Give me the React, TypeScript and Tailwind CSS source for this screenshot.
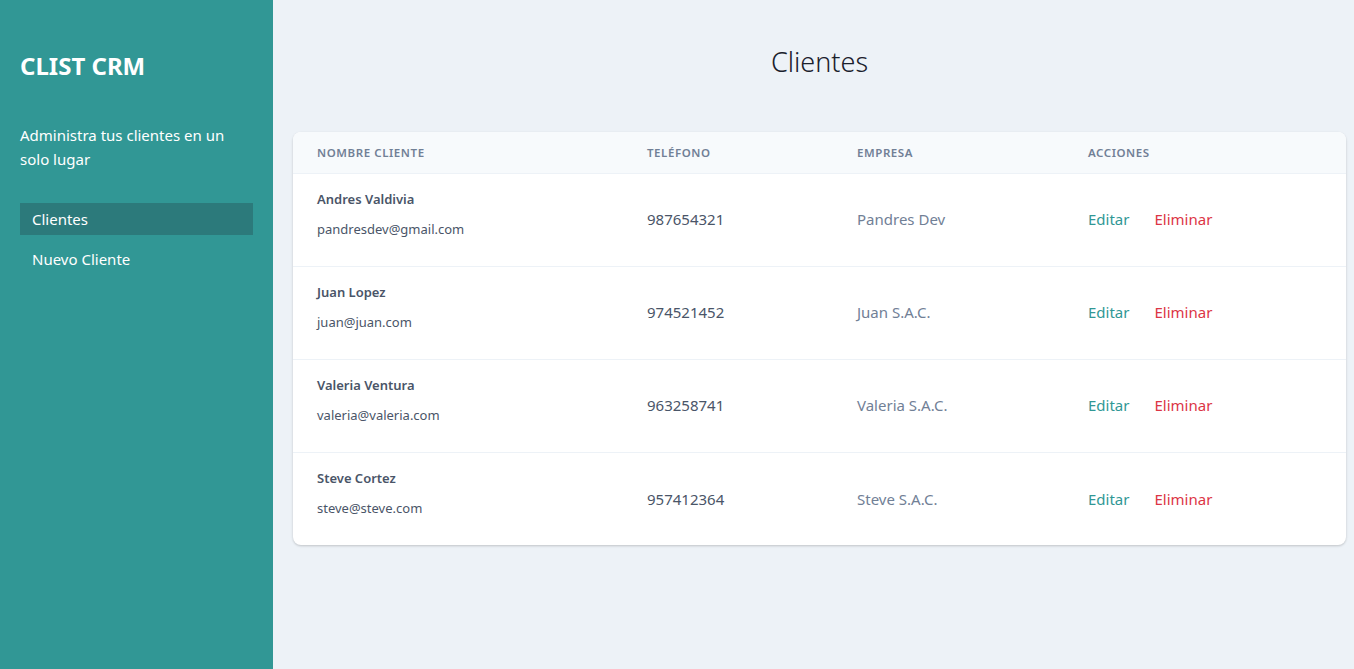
import React from "react";

const clientes = [
  { nombre: "Andres Valdivia", email: "pandresdev@gmail.com", telefono: "987654321", empresa: "Pandres Dev" },
  { nombre: "Juan Lopez", email: "juan@juan.com", telefono: "974521452", empresa: "Juan S.A.C." },
  { nombre: "Valeria Ventura", email: "valeria@valeria.com", telefono: "963258741", empresa: "Valeria S.A.C." },
  { nombre: "Steve Cortez", email: "steve@steve.com", telefono: "957412364", empresa: "Steve S.A.C." },
];

const App = () => {
  return (
    <div className="flex min-h-screen font-['Noto_Sans','Open_Sans',sans-serif]">
      <aside className="w-[273px] shrink-0 bg-[#319795] px-5 pt-[48px]">
        <h2 className="text-[24px] leading-[36px] font-bold text-white">CLIST CRM</h2>
        <p className="mt-[39px] text-[15px] leading-[24px] text-white">
          Administra tus clientes en un solo lugar
        </p>
        <nav className="mt-[32px] flex flex-col gap-2">
          <a className="block bg-[#2c7a7b] px-3 h-[32px] leading-[32px] text-[15px] text-white">Clientes</a>
          <a className="block px-3 h-[32px] leading-[32px] text-[15px] text-white">Nuevo Cliente</a>
        </nav>
      </aside>

      <main className="flex-1 bg-[#edf2f7] pl-5 pr-2 pt-[42px]">
        <h1 className="text-center text-[27px] leading-[40px] font-light text-[#1a202c]">Clientes</h1>

        <div className="mt-[50px] bg-white rounded-lg shadow-[0_1px_3px_rgba(0,0,0,0.12),0_1px_2px_rgba(0,0,0,0.08)] overflow-hidden">
          <table className="w-full border-collapse">
            <thead>
              <tr className="bg-[#f7fafc] border-b border-[#edf2f7] h-[41px]">
                <th className="w-[330px] px-6 text-left text-[11.5px] font-semibold uppercase tracking-wider text-[#718096]">Nombre Cliente</th>
                <th className="w-[210px] px-6 text-left text-[11.5px] font-semibold uppercase tracking-wider text-[#718096]">Teléfono</th>
                <th className="w-[231px] px-6 text-left text-[11.5px] font-semibold uppercase tracking-wider text-[#718096]">Empresa</th>
                <th className="px-6 text-left text-[11.5px] font-semibold uppercase tracking-wider text-[#718096]">Acciones</th>
              </tr>
            </thead>
            <tbody>
              {clientes.map((c, ind) => (
                <tr key={ind} className={`h-[93px] ${ind < clientes.length - 1 ? "border-b border-[#edf2f7]" : ""}`}>
                  <td className="px-6 align-middle">
                    <p className="text-[13px] leading-[20px] font-semibold text-[#4a5568]">{c.nombre}</p>
                    <p className="mt-[10px] mb-[12px] text-[13px] leading-[20px] text-[#4a5568]">{c.email}</p>
                  </td>
                  <td className="px-6 text-[15px] text-[#4a5568]">{c.telefono}</td>
                  <td className="px-6 text-[15px] text-[#718096]">{c.empresa}</td>
                  <td className="px-6 text-[15px]">
                    <button className="text-[#319795] mr-[25px]">Editar</button>
                    <button className="text-[#dc3545]">Eliminar</button>
                  </td>
                </tr>
              ))}
            </tbody>
          </table>
        </div>
      </main>
    </div>
  );
};

export default App;
